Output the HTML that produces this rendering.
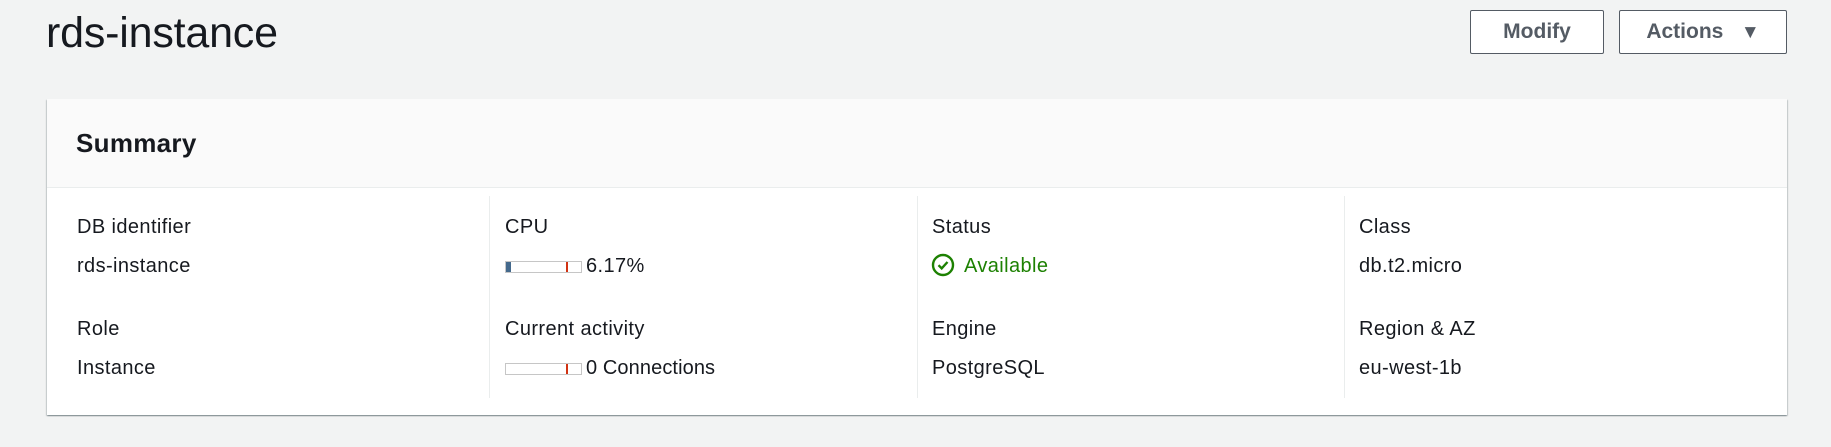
<!DOCTYPE html>
<html><head><meta charset="utf-8"><style>
*{margin:0;padding:0;box-sizing:border-box}
body{width:1831px;height:447px;background:#f2f3f3;font-family:"Liberation Sans",sans-serif;color:#16191f;position:relative;overflow:hidden}
.abs{position:absolute;white-space:nowrap}
h1{position:absolute;left:46px;top:8px;font-size:43px;font-weight:400;letter-spacing:-0.2px;line-height:50px}
.btn{position:absolute;top:10px;height:44px;border:1px solid #545b64;border-radius:2px;background:#fff;color:#545b64;font-weight:700;font-size:21px;line-height:42px;text-align:center}
.card{position:absolute;left:47px;top:99px;width:1740px;height:316px;background:#fff;box-shadow:0 1px 1px 0 rgba(0,28,36,.3),1px 1px 1px 0 rgba(0,28,36,.15),-1px 1px 1px 0 rgba(0,28,36,.15)}
.hd{position:absolute;left:0;top:0;width:100%;height:89px;background:#fafafa;border-bottom:1px solid #eaeded}
.div{position:absolute;top:97px;height:202px;width:1px;background:#eaeded}
.l{font-size:20px;line-height:22px;letter-spacing:0.4px}
.bar{position:absolute;width:77px;height:12px;border:1px solid #c6c6c6;background:#fff}
.bar i{position:absolute;left:0;top:0;width:5px;height:10px;background:#44698c}
.bar b{position:absolute;left:60px;top:0;width:2px;height:10px;background:#d13212}
</style></head><body>
<h1>rds-instance</h1>
<div class="btn" style="left:1470px;width:134px">Modify</div>
<div class="btn" style="left:1619px;width:168px">Actions&nbsp;&nbsp;&nbsp;<span style="font-size:19px">▼</span></div>
<div class="card">
<div class="hd"></div>
<div class="abs" style="left:29px;top:29px;font-size:26px;font-weight:700;line-height:30px;letter-spacing:0.3px">Summary</div>
<div class="div" style="left:442px"></div>
<div class="div" style="left:870px"></div>
<div class="div" style="left:1297px"></div>
</div>
<div class="abs l" style="left:77px;top:216px">DB identifier</div>
<div class="abs l" style="left:77px;top:255px">rds-instance</div>
<div class="abs l" style="left:77px;top:318px">Role</div>
<div class="abs l" style="left:77px;top:357px">Instance</div>

<div class="abs l" style="left:505px;top:216px">CPU</div>
<div class="bar" style="left:505px;top:261px"><i></i><b></b></div>
<div class="abs l" style="left:586px;top:255px">6.17%</div>
<div class="abs l" style="left:505px;top:318px">Current activity</div>
<div class="bar" style="left:505px;top:363px"><b></b></div>
<div class="abs l" style="left:586px;top:357px;letter-spacing:0.1px">0 Connections</div>

<div class="abs l" style="left:932px;top:216px">Status</div>
<svg class="abs" style="left:931px;top:253px" width="24" height="24" viewBox="0 0 24 24"><circle cx="12" cy="12" r="10" fill="none" stroke="#1d8102" stroke-width="2.4"/><path d="M7.5 12.2l3.2 3.2 5.8-6.4" fill="none" stroke="#1d8102" stroke-width="2.4"/></svg>
<div class="abs l" style="left:964px;top:255px;color:#1d8102">Available</div>
<div class="abs l" style="left:932px;top:318px">Engine</div>
<div class="abs l" style="left:932px;top:357px">PostgreSQL</div>

<div class="abs l" style="left:1359px;top:216px">Class</div>
<div class="abs l" style="left:1359px;top:255px">db.t2.micro</div>
<div class="abs l" style="left:1359px;top:318px">Region &amp; AZ</div>
<div class="abs l" style="left:1359px;top:357px">eu-west-1b</div>
</body></html>
